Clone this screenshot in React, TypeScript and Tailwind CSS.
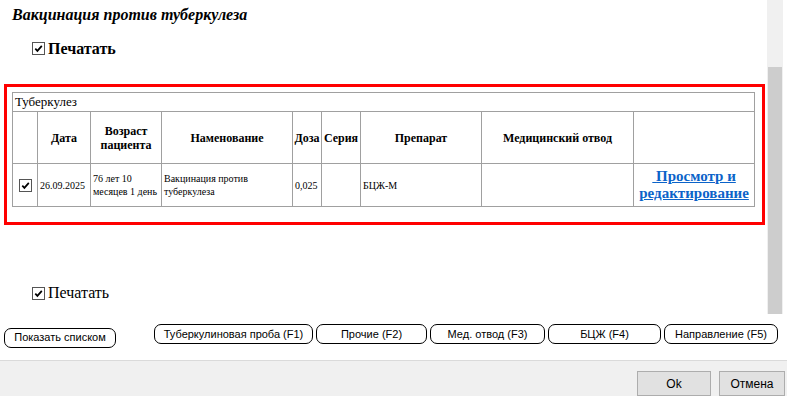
import { ReactNode } from 'react';

const serif = "font-[family-name:'Liberation_Serif','Times_New_Roman',serif]";
const sans = "font-[family-name:'Liberation_Sans',Arial,sans-serif]";

function Check({ className = '' }: { className?: string }) {
  return (
    <span
      className={`inline-flex h-[13px] w-[13px] shrink-0 items-center justify-center border border-[#555] bg-white ${className}`}
    >
      <svg viewBox="0 0 11 11" className="h-[11px] w-[11px]">
        <path d="M2.3 5.6 L4.4 7.9 L8.8 2.9" fill="none" stroke="#000" strokeWidth="1.7" />
      </svg>
    </span>
  );
}

function RoundBtn({ w, children }: { w: string; children: ReactNode }) {
  return (
    <button
      className={`${w} h-[20px] shrink-0 rounded-[7px] border border-black bg-white text-[11px] leading-none text-black ${sans}`}
    >
      {children}
    </button>
  );
}

const cell = 'border border-[#a0a0a0] p-0';

export default function App() {
  return (
    <div className={`flex h-[396px] w-[787px] flex-col overflow-hidden bg-white text-black ${serif}`}>
      {/* scrollable area */}
      <div className="flex h-[316px]">
        <div className="flex w-[767px] flex-col">
          <div className="pl-3 pt-[5px] text-[16px] font-bold italic leading-[20px]">
            Вакцинация против туберкулеза
          </div>
          <div className="mt-[14px] flex items-start pl-8 text-[16px] font-bold leading-[20px]">
            <Check className="mt-[3px]" />
            <span className="ml-[3px]">Печатать</span>
          </div>

          <div className="ml-1 mt-[25px] h-[141px] w-[761px] border-[3px] border-[#ff0000] pl-[5px] pt-[5px]">
            <table className="w-[742px] table-fixed border-collapse border border-[#a0a0a0]">
              <colgroup>
                <col className="w-[25px]" />
                <col className="w-[53px]" />
                <col className="w-[71px]" />
                <col className="w-[131px]" />
                <col className="w-[29px]" />
                <col className="w-[39px]" />
                <col className="w-[121px]" />
                <col className="w-[152px]" />
                <col className="w-[121px]" />
              </colgroup>
              <tbody>
                <tr className="h-[19px]">
                  <td colSpan={9} className={`${cell} pl-[2px] text-[13px] leading-[16px]`}>
                    Туберкулез
                  </td>
                </tr>
                <tr className="h-[52px] text-center text-[12px] font-bold leading-[14px]">
                  <td className={cell}></td>
                  <td className={cell}>Дата</td>
                  <td className={cell}>
                    Возраст
                    <br />
                    пациента
                  </td>
                  <td className={cell}>Наменование</td>
                  <td className={cell}>Доза</td>
                  <td className={cell}>Серия</td>
                  <td className={cell}>Препарат</td>
                  <td className={cell}>Медицинский отвод</td>
                  <td className={cell}></td>
                </tr>
                <tr className="h-[43px] text-[10px] leading-[13px]">
                  <td className={cell}>
                    <div className="flex justify-center">
                      <Check />
                    </div>
                  </td>
                  <td className={`${cell} pl-[2px]`}>26.09.2025</td>
                  <td className={`${cell} pl-[2px]`}>
                    76 лет 10
                    <br />
                    месяцев 1 день
                  </td>
                  <td className={`${cell} pl-[2px]`}>
                    Вакцинация против
                    <br />
                    туберкулеза
                  </td>
                  <td className={`${cell} pl-[2px]`}>0,025</td>
                  <td className={cell}></td>
                  <td className={`${cell} pl-[2px]`}>БЦЖ-М</td>
                  <td className={cell}></td>
                  <td className={`${cell} text-center text-[15px] font-bold leading-[17px]`}>
                    <a href="#" className="text-[#0b63c9] underline">
                      {'\u00a0'}Просмотр и
                      <br />
                      редактирование
                    </a>
                  </td>
                </tr>
              </tbody>
            </table>
          </div>

          <div className="mt-[58px] flex items-start pl-8 text-[16px] leading-[20px]">
            <Check className="mt-[4px]" />
            <span className="ml-[3px]">Печатать</span>
          </div>
        </div>

        {/* scrollbar */}
        <div className="flex w-[16px] flex-col bg-[#f0f0f0]">
          <div className="h-[67px]" />
          <div className="mx-[1px] flex-1 bg-[#cdcdcd]" />
        </div>
      </div>

      {/* action buttons */}
      <div className="mt-[10px] flex">
        <div className="ml-1">
          <RoundBtn w="w-[112px]">Показать списком</RoundBtn>
        </div>
        <div className="ml-[38px] flex gap-[3px]">
          <RoundBtn w="w-[159px]">Туберкулиновая проба (F1)</RoundBtn>
          <RoundBtn w="w-[111px]">Прочие (F2)</RoundBtn>
          <RoundBtn w="w-[115px]">Мед. отвод (F3)</RoundBtn>
          <RoundBtn w="w-[113px]">БЦЖ (F4)</RoundBtn>
          <RoundBtn w="w-[114px]">Направление (F5)</RoundBtn>
        </div>
      </div>

      {/* footer */}
      <div className="mt-[12px] flex flex-1 justify-end gap-2 border-t border-[#dadada] bg-[#f0f0f0] pr-[2px] pt-[10px]">
        <button className={`h-[25px] w-[74px] border border-[#adadad] bg-[#e1e1e1] text-[12px] ${sans}`}>Ok</button>
        <button className={`h-[25px] w-[66px] border border-[#adadad] bg-[#e1e1e1] text-[12px] ${sans}`}>Отмена</button>
      </div>
    </div>
  );
}
